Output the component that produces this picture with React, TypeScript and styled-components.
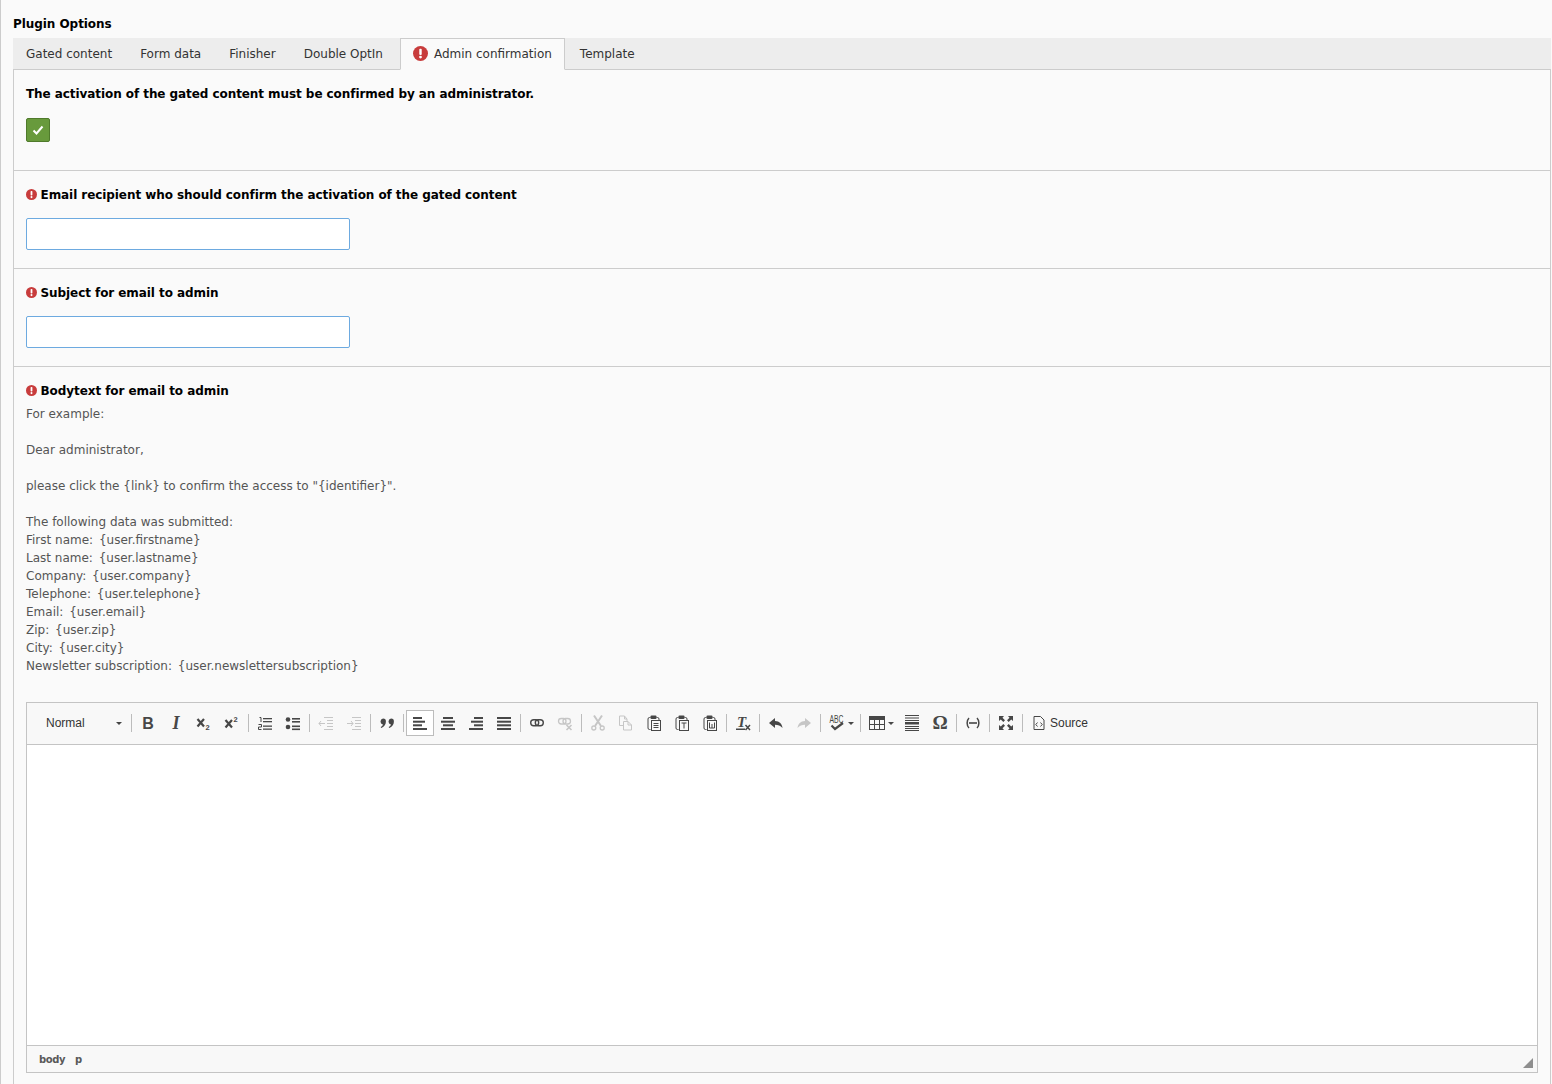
import React from "react";
import styled, { createGlobalStyle } from "styled-components";

const Global = createGlobalStyle`
  html, body { margin: 0; padding: 0; background: #fafafa; }
  #root { height: 1084px; overflow: hidden; }
`;

const Page = styled.div`
  box-sizing: border-box;
  height: 1084px;
  overflow: hidden;
  background: #fafafa;
  border-left: 1px solid #ccc;
  padding: 15px 1px 0 12px;
  font-family: "DejaVu Sans", Verdana, sans-serif;
  font-size: 12px;
  line-height: 18px;
  color: #333;
`;
const Title = styled.h2`
  margin: 0 0 5px;
  font-size: 12px;
  line-height: 18px;
  font-weight: 700;
  letter-spacing: -0.06px;
  color: #000;
`;
const TabBar = styled.div`
  display: flex;
  height: 32px;
  box-sizing: border-box;
  background: #ededed;
  border-bottom: 1px solid #ccc;
`;
const Tab = styled.div<{ $active?: boolean }>`
  display: flex;
  align-items: center;
  gap: 6px;
  height: 32px;
  box-sizing: border-box;
  padding: 0 ${(p) => (p.$active ? 12 : 13)}px;
  margin: ${(p) => (p.$active ? "0 1px 0 3px" : "0")};
  border: 1px solid ${(p) => (p.$active ? "#ccc" : "transparent")};
  border-bottom: 1px solid ${(p) => (p.$active ? "#fafafa" : "transparent")};
  background: ${(p) => (p.$active ? "#fafafa" : "transparent")};
  color: #333;
  white-space: nowrap;
  &:first-child { margin-left: -1px; }
`;
const Panel = styled.div`
  border-left: 1px solid #ccc;
  border-right: 1px solid #ccc;
`;
const Section = styled.section<{ $pb: number }>`
  padding: 15px 12px ${(p) => p.$pb}px;
  border-bottom: 1px solid #ccc;
  &:last-child { border-bottom: 0; }
`;
const Label = styled.div<{ $mb: number }>`
  display: flex;
  align-items: center;
  gap: 3.5px;
  font-weight: 700;
  letter-spacing: -0.07px;
  color: #000;
  margin-bottom: ${(p) => p.$mb}px;
`;
const CheckBox = styled.div`
  display: flex;
  align-items: center;
  justify-content: center;
  width: 24px;
  height: 24px;
  box-sizing: border-box;
  background: #689a3c;
  border: 1px solid #4f7a2b;
  border-radius: 2px;
`;
const Input = styled.div`
  width: 324px;
  height: 32px;
  box-sizing: border-box;
  background: #fff;
  border: 1px solid #6daae0;
  border-radius: 2px;
`;
const Description = styled.div`
  color: #555;
  min-height: 18px;
`;
const Key = styled.span`
  margin-right: 2px;
`;
const Descriptions = styled.div`
  margin-bottom: 27px;
`;
const Editor = styled.div`
  border: 1px solid #c4c4c4;
  background: #fff;
`;
const Toolbar = styled.div`
  display: flex;
  align-items: center;
  height: 42px;
  padding: 0 0 1px 6px;
  box-sizing: border-box;
  background: #f8f8f8;
  border-bottom: 1px solid #c4c4c4;
`;
const Combo = styled.div`
  position: relative;
  width: 94px;
  padding-left: 13px;
  box-sizing: border-box;
  font-family: "Liberation Sans", Arial, sans-serif;
  font-size: 12px;
  color: #333;
  margin-right: 2px;
`;
const ComboArrow = styled.i`
  position: absolute;
  right: 5px;
  top: 8px;
  border: 3px solid transparent;
  border-top-color: #444;
  border-bottom: 0;
`;
const Sep = styled.i`
  display: block;
  width: 1px;
  height: 18px;
  margin: 0 2px;
  background: #bcbcbc;
`;
const Btn = styled.div<{ $active?: boolean; $w?: number; $off?: boolean }>`
  display: flex;
  align-items: center;
  justify-content: ${(p) => (p.$w ? "flex-start" : "center")};
  box-sizing: border-box;
  width: ${(p) => p.$w ?? 28}px;
  height: 26px;
  padding-left: ${(p) => (p.$w ? 5 : 0)}px;
  border: 1px solid ${(p) => (p.$active ? "#bcbcbc" : "transparent")};
  background: ${(p) => (p.$active ? "#fff" : "transparent")};
  color: ${(p) => (p.$off ? "#c6c6c6" : "#474747")};
  font-family: "Liberation Sans", Arial, sans-serif;
  font-size: 12px;
`;
const SourceText = styled.span`
  margin-left: 3px;
  color: #333;
`;
const Drop = styled.i`
  margin-left: 3px;
  border: 3px solid transparent;
  border-top-color: #474747;
  border-bottom: 0;
`;
const Omega = styled.span`
  font-family: "Liberation Serif", serif;
  font-size: 19px;
  font-weight: 700;
  line-height: 22px;
`;
const Content = styled.div`
  height: 300px;
`;
const Status = styled.div`
  position: relative;
  display: flex;
  gap: 10px;
  align-items: center;
  height: 27px;
  box-sizing: border-box;
  padding: 1px 0 0 12px;
  background: #f8f8f8;
  border-top: 1px solid #c4c4c4;
  font-size: 10px;
  font-weight: 700;
  letter-spacing: -0.4px;
  color: #595959;
`;
const Grip = styled.i`
  position: absolute;
  right: 4px;
  bottom: 4px;
  width: 0;
  height: 0;
  border-left: 10px solid transparent;
  border-bottom: 10px solid #8e8e8e;
`;
const ErrorSvg = styled.svg`
  flex: none;
  margin-top: -1px;
`;

const Svg: React.FC<{ children: React.ReactNode; w?: number }> = ({ children, w = 16 }) => (
  <svg width={w} height={16} viewBox={`0 0 ${w} 16`} fill="none" stroke="none" overflow="visible">
    {children}
  </svg>
);
const C = "currentColor";
const Lines = ({ rows }: { rows: [number, number, number, number?][] }) => (
  <>
    {rows.map(([x, y, w, h = 1.6], i) => (
      <rect key={i} x={x} y={y} width={w} height={h} fill={C} />
    ))}
  </>
);
const Clip = ({ children }: { children?: React.ReactNode }) => (
  <>
    <path d="M4.500 2.500H3.500a1.500 1.500 0 0 0-1.500 1.500v9a1.500 1.500 0 0 0 1.500 1.500h1M10.500 2.500h1A1.500 1.500 0 0 1 13 4v1" stroke={C} />
    <rect x="4.500" y="0.500" width="6" height="3.500" rx="1" fill={C} />
    <rect x="5.500" y="5.500" width="9" height="10" stroke={C} />
    {children}
  </>
);

const icons: Record<string, React.ReactNode> = {
  bold: <Svg><text x="8" y="13.500" textAnchor="middle" fontFamily="Liberation Sans" fontWeight="700" fontSize="16" fill={C}>B</text></Svg>,
  italic: <Svg><text x="8" y="14" textAnchor="middle" fontFamily="Liberation Serif" fontStyle="italic" fontWeight="700" fontSize="18" fill={C}>I</text></Svg>,
  sub: <Svg><path d="M1.500 4l6.500 7.500M8 4l-6.500 7.500" stroke={C} strokeWidth="2.200" /><text x="9.500" y="15" fontFamily="Liberation Sans" fontWeight="700" fontSize="7.500" fill={C}>2</text></Svg>,
  sup: <Svg><path d="M1.500 5l6.500 7.500M8 5l-6.500 7.500" stroke={C} strokeWidth="2.200" /><text x="9.500" y="7" fontFamily="Liberation Sans" fontWeight="700" fontSize="7.500" fill={C}>2</text></Svg>,
  ol: <Svg><Lines rows={[[6,3,9,1.300],[6,6,9,1.300],[6,10.500,9,1.300],[6,13.500,9,1.300]]} /><path d="M2.500 2.500h1.500V7M1.500 9.500h3V12h-3v2.500h3" stroke={C} strokeWidth="1" /></Svg>,
  ul: <Svg><Lines rows={[[7,3,8],[7,6,8],[7,10.500,8],[7,13.500,8]]} /><circle cx="3" cy="4.500" r="2.300" fill={C} /><circle cx="3" cy="12" r="2.300" fill={C} /></Svg>,
  outdent: <Svg><Lines rows={[[6,2,9,1],[9,5,6,1],[9,8,6,1],[9,11,6,1],[6,14,9,1],[1,8,6,1]]} /><path d="M3 6L1 8.500 3 11" stroke={C} /></Svg>,
  indent: <Svg><Lines rows={[[6,2,9,1],[9,5,6,1],[9,8,6,1],[9,11,6,1],[6,14,9,1],[1,8,6,1]]} /><path d="M5 6l2 2.500L5 11" stroke={C} /></Svg>,
  quote: <Svg><path d="M4 3.500a3 3 0 0 1 2.900 3.200C6.900 9.500 5 12 2.200 13l-.5-1c1.200-.7 2-1.500 2.200-2.600A3 3 0 0 1 4 3.500zM12 3.500a3 3 0 0 1 2.900 3.200c0 2.800-1.900 5.300-4.700 6.300l-.5-1c1.200-.7 2-1.500 2.200-2.600A3 3 0 0 1 12 3.500z" fill={C} /></Svg>,
  left: <Svg><Lines rows={[[1,2,9,2],[1,5.700,12,2],[1,9.300,9,2],[1,13,14,2]]} /></Svg>,
  center: <Svg><Lines rows={[[3,2,10,2],[1,5.700,14,2],[3,9.300,10,2],[1,13,14,2]]} /></Svg>,
  right: <Svg><Lines rows={[[6,2,9,2],[3,5.700,12,2],[6,9.300,9,2],[1,13,14,2]]} /></Svg>,
  justify: <Svg><Lines rows={[[1,2,14,2],[1,5.700,14,2],[1,9.300,14,2],[1,13,14,2]]} /></Svg>,
  link: <Svg><rect x="1.700" y="4.700" width="8" height="6" rx="3" stroke={C} strokeWidth="1.400" /><rect x="6.300" y="4.700" width="8" height="6" rx="3" stroke={C} strokeWidth="1.400" /></Svg>,
  unlink: <Svg><rect x="1.500" y="3.500" width="7.500" height="5.500" rx="2.700" stroke={C} strokeWidth="1.300" /><rect x="6" y="3.500" width="7.500" height="5.500" rx="2.700" stroke={C} strokeWidth="1.300" /><path d="M9.500 10l5 5M14.500 10l-5 5" stroke={C} strokeWidth="1.600" /></Svg>,
  cut: <Svg><path d="M4 0.500l7 10.500M12 0.500L5 11" stroke={C} strokeWidth="2" /><circle cx="3.800" cy="13" r="2" stroke={C} strokeWidth="1.300" /><circle cx="12.200" cy="13" r="2" stroke={C} strokeWidth="1.300" /></Svg>,
  copy: <Svg><path d="M1.500 1h5l2.500 3v2M9 4H6.500V1M1.500 1v9.500h4M5.500 6.500h4.500l3.500 3.500v5h-8zM10 6.500V10h3.500" stroke={C} /></Svg>,
  paste: <Svg><Clip><Lines rows={[[7.500,8,5,1],[7.500,10,5,1],[7.500,12,5,1]]} /></Clip></Svg>,
  pastet: <Svg><Clip><path d="M7.500 8h5M10 8v5.500" stroke={C} /></Clip></Svg>,
  pastew: <Svg><Clip><path d="M7.500 7.500v5.500h5V7.500M10 9v4" stroke={C} /></Clip></Svg>,
  clear: <Svg><text x="2" y="12" fontFamily="Liberation Serif" fontStyle="italic" fontWeight="700" fontSize="15" fill={C}>T</text><rect x="1" y="13.500" width="9" height="1.500" fill={C} /><path d="M10.500 10l4.500 5M15 10l-4.500 5" stroke={C} strokeWidth="1.500" /></Svg>,
  undo: <Svg><path d="M7 3L1 8l6 5V9.800c3 0 5.500.7 7.500 3.200C14 9 11.500 6 7 6z" fill={C} /></Svg>,
  redo: <Svg><path d="M9 3l6 5-6 5V9.800c-3 0-5.500.7-7.500 3.200C2 9 4.500 6 9 6z" fill={C} /></Svg>,
  spell: <Svg><text x="0.500" y="8" fontFamily="Liberation Sans" fontSize="10" textLength="14" lengthAdjust="spacingAndGlyphs" fill={C}>ABC</text><path d="M2.500 10.500l3.500 3.500L14 8" stroke={C} strokeWidth="2.200" /></Svg>,
  table: <Svg><rect x="0.500" y="1.500" width="15" height="13" stroke={C} /><rect x="0.500" y="1.500" width="15" height="3.500" fill={C} /><path d="M5.500 5v9M10.500 5v9M1 9.500h14" stroke={C} /></Svg>,
  hr: <Svg><Lines rows={[[1,0,14,1],[1,2.500,14,1],[1,5,14,1],[1,7,14,2.500],[1,11,14,1],[1,13,14,1],[1,15,14,1]]} /></Svg>,
  omega: <Omega>Ω</Omega>,
  pagebreak: <Svg><path d="M4 3C1.500 5.500 1.500 10.500 4 13M12 3c2.500 2.500 2.500 7.500 0 10" stroke={C} strokeWidth="1.500" /><rect x="4" y="7.200" width="8" height="1.600" fill={C} /></Svg>,
  max: <Svg><path d="M1 1h5L4.500 2.800 7 5.300 5.300 7 2.800 4.500 1 6zM15 1v5l-1.800-1.500L10.700 7 9 5.300l2.500-2.500L10 1zM1 15v-5l1.800 1.500L5.300 9 7 10.700l-2.500 2.500L6 15zM15 15h-5l1.500-1.800L9 10.700 10.700 9l2.500 2.500L15 10z" fill={C} /></Svg>,
  source: <Svg><path d="M3 1.500h6.500l3.500 3.500v9.500H3z" stroke={C} /><path d="M6.500 7.500L4.800 9.500l1.700 2M9.500 7.500l1.700 2-1.700 2" stroke={C} /></Svg>,
};

type Item = { i: string; off?: boolean; active?: boolean; w?: number; drop?: boolean; text?: string };
const groups: Item[][] = [
  [{ i: "bold" }, { i: "italic" }, { i: "sub" }, { i: "sup" }],
  [{ i: "ol" }, { i: "ul" }],
  [{ i: "outdent", off: true }, { i: "indent", off: true }],
  [{ i: "quote" }],
  [{ i: "left", active: true }, { i: "center" }, { i: "right" }, { i: "justify" }],
  [{ i: "link" }, { i: "unlink", off: true }],
  [{ i: "cut", off: true }, { i: "copy", off: true }, { i: "paste" }, { i: "pastet" }, { i: "pastew" }],
  [{ i: "clear" }],
  [{ i: "undo" }, { i: "redo", off: true }],
  [{ i: "spell", w: 35, drop: true }],
  [{ i: "table", w: 35, drop: true }, { i: "hr" }, { i: "omega" }],
  [{ i: "pagebreak" }],
  [{ i: "max" }],
  [{ i: "source", w: 70, text: "Source" }],
];

const ErrorIcon: React.FC<{ size: number }> = ({ size }) => (
  <ErrorSvg width={size} height={size} viewBox="0 0 16 16">
    <circle cx="8" cy="8" r="8" fill="#c83c3c" />
    <rect x="6.700" y="3" width="2.600" height="6.500" rx="1" fill="#fff" />
    <circle cx="8" cy="11.800" r="1.500" fill="#fff" />
  </ErrorSvg>
);

const example: [string?, string?][] = [
  ["", "For example:"], [], ["", "Dear administrator,"], [],
  ["", 'please click the {link} to confirm the access to "{identifier}".'], [],
  ["", "The following data was submitted:"],
  ["First name:", "{user.firstname}"], ["Last name:", "{user.lastname}"],
  ["Company:", "{user.company}"], ["Telephone:", "{user.telephone}"], ["Email:", "{user.email}"],
  ["Zip:", "{user.zip}"], ["City:", "{user.city}"], ["Newsletter subscription:", "{user.newslettersubscription}"],
];

export default function App() {
  return (
    <Page>
      <Global />
      <Title>Plugin Options</Title>
      <TabBar>
        <Tab>Gated content</Tab>
        <Tab>Form data</Tab>
        <Tab>Finisher</Tab>
        <Tab>Double OptIn</Tab>
        <Tab $active><ErrorIcon size={15} />Admin confirmation</Tab>
        <Tab>Template</Tab>
      </TabBar>
      <Panel>
        <Section $pb={28}>
          <Label $mb={15}>The activation of the gated content must be confirmed by an administrator.</Label>
          <CheckBox>
            <svg width="12" height="12" viewBox="0 0 12 12"><path d="M1.500 6.500l3 3 6-7" stroke="#fff" strokeWidth="2" fill="none" /></svg>
          </CheckBox>
        </Section>
        <Section $pb={18}>
          <Label $mb={14}><ErrorIcon size={11} />Email recipient who should confirm the activation of the gated content</Label>
          <Input />
        </Section>
        <Section $pb={18}>
          <Label $mb={14}><ErrorIcon size={11} />Subject for email to admin</Label>
          <Input />
        </Section>
        <Section $pb={40}>
          <Label $mb={5}><ErrorIcon size={11} />Bodytext for email to admin</Label>
          <Descriptions>
            {example.map(([k, v], i) => (
              <Description key={i}>
                {k ? <Key>{k} </Key> : null}
                {v}
              </Description>
            ))}
          </Descriptions>
          <Editor>
            <Toolbar>
              <Combo>Normal<ComboArrow /></Combo>
              {groups.map((g, gi) => (
                <React.Fragment key={gi}>
                  <Sep />
                  {g.map((b) => (
                    <Btn key={b.i} $active={b.active} $off={b.off} $w={b.w}>
                      {icons[b.i]}
                      {b.drop && <Drop />}
                      {b.text && <SourceText>{b.text}</SourceText>}
                    </Btn>
                  ))}
                </React.Fragment>
              ))}
            </Toolbar>
            <Content />
            <Status>
              <span>body</span><span>p</span>
              <Grip />
            </Status>
          </Editor>
        </Section>
      </Panel>
    </Page>
  );
}
